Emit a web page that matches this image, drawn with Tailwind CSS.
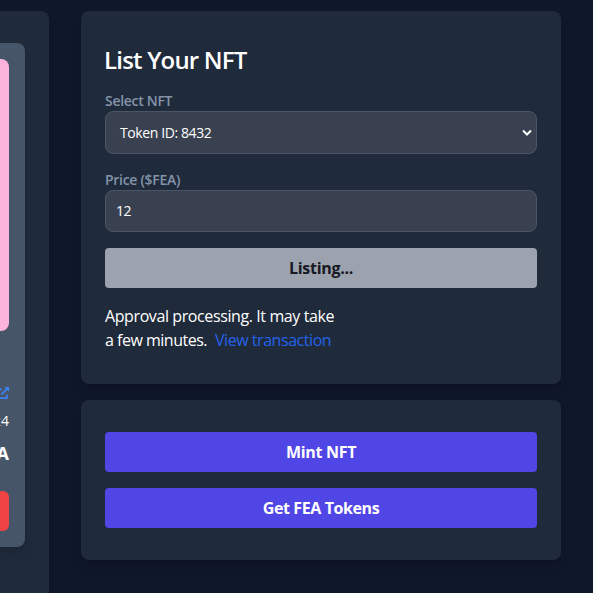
<!DOCTYPE html>
<html lang="en">
<head>
<meta charset="utf-8">
<title>NFT Marketplace</title>
<script src="https://cdn.jsdelivr.net/npm/@tailwindcss/browser@4"></script>
</head>
<body class="h-[593px] overflow-hidden bg-[#0f172a] font-['Open_Sans','Noto_Sans',sans-serif] text-white">
<div class="flex h-[593px] gap-8 overflow-hidden pt-[11px]">
  <section class="flex h-[640px] w-[49px] shrink-0 justify-end rounded-tr-lg bg-[#1f2a3b] pt-8 pr-6 shadow-lg">
    <article class="flex h-[504px] w-[25px] flex-col items-end overflow-hidden rounded-r-lg bg-[#475569] pt-4 pr-4 shadow-lg">
      <div class="h-[272px] w-[9px] shrink-0 rounded-r-lg bg-[#fdb4dc]"></div>
      <div class="mt-[56px] flex h-3 w-[9px] shrink-0 justify-end">
        <svg class="h-3 w-3 shrink-0" viewBox="0 0 12 12" fill="none" stroke="#3b82f6" stroke-width="1.700"><path d="M5 2.300H1V11.100H10V7.500"/><path d="M4.300 7.700 10.300 1.700"/><path d="M7.300 0H12V4.700Z" fill="#3b82f6" stroke="none"/></svg>
      </div>
      <p class="mt-3 flex w-[9px] shrink-0 justify-end text-sm leading-5">24</p>
      <p class="mt-2 flex w-[9px] shrink-0 justify-end text-lg leading-7 font-bold">A</p>
      <div class="mt-6 h-10 w-[9px] shrink-0 rounded-r-md bg-[#ef4444]"></div>
    </article>
  </section>

  <main class="flex w-[480px] shrink-0 flex-col gap-4">
    <section class="h-[373px] shrink-0 rounded-lg bg-[#1f2a3b] px-6 pt-[33px] shadow-lg">
      <h2 class="-ml-px text-2xl leading-8 font-semibold tracking-[-0.8px]"><span>List Your NFT</span></h2>
      <label class="mt-[15px] block h-5 text-sm leading-5 font-semibold tracking-[-0.3px] text-[#8394aa]"><span>Select NFT</span></label>
      <div class="flex h-[43px] items-center justify-between rounded-lg border border-[#4b5563] bg-[#394150] pr-1 pl-[14px] text-sm">
        <span class="tracking-[-0.4px]">Token ID: 8432</span>
        <svg class="h-[10px] w-[10px]" viewBox="0 0 10 10" fill="none" stroke="white" stroke-width="2"><path d="M1 2.500 5 6.500 9 2.500"/></svg>
      </div>
      <label class="mt-4 block h-5 text-sm leading-5 font-semibold tracking-[-0.3px] text-[#8394aa]"><span>Price ($FEA)</span></label>
      <div class="flex h-[42px] items-center rounded-lg border border-[#4b5563] bg-[#394150] px-[10px] text-sm"><span class="tracking-[-0.4px]">12</span></div>
      <div class="mt-4 flex h-10 items-center justify-center rounded bg-[#9ca3af] font-bold text-[#171923]"><span class="tracking-[-0.3px]">Listing...</span></div>
      <p class="mt-4 text-base leading-6"><span class="tracking-[-0.400px]">Approval processing. It may take</span><br><span class="tracking-[-0.500px]">a few minutes.</span><a class="ml-2 tracking-[-0.450px] text-[#2563eb]">View transaction</a></p>
    </section>
    <section class="flex h-[160px] shrink-0 flex-col gap-4 rounded-lg bg-[#1f2a3b] px-6 pt-8 shadow-lg">
      <div class="flex h-10 items-center justify-center rounded bg-[#4f46e5] font-bold"><span class="tracking-[-0.3px]">Mint NFT</span></div>
      <div class="flex h-10 items-center justify-center rounded bg-[#4f46e5] font-bold"><span class="tracking-[-0.4px]">Get FEA Tokens</span></div>
    </section>
  </main>
</div>
</body>
</html>
